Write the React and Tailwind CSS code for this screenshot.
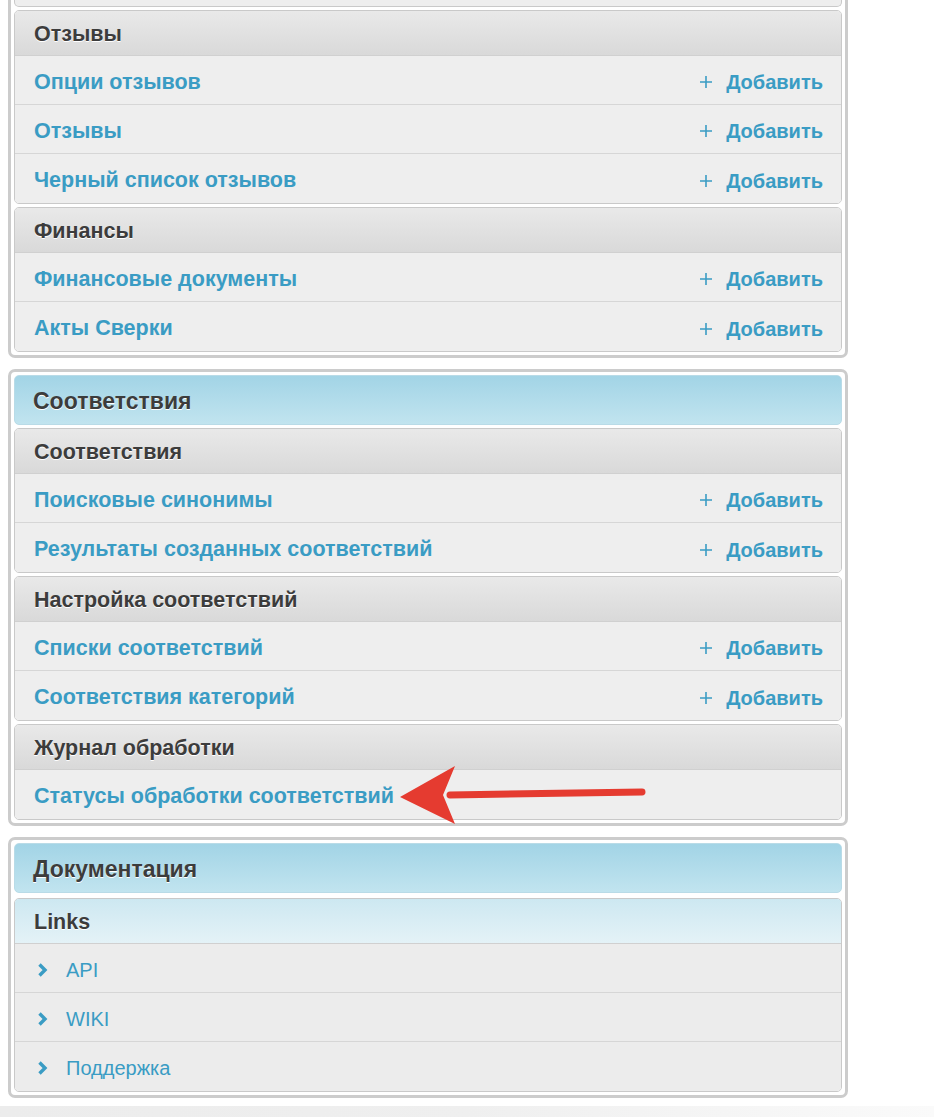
import React from 'react';

const font = { fontFamily: '"Liberation Sans", Arial, sans-serif' };

function Plus() {
  return (
    <svg width="14" height="14" viewBox="0 0 14 14" className="shrink-0">
      <path d="M7 1v12M1 7h12" stroke="#3a9cc4" strokeWidth="1.6" />
    </svg>
  );
}

function Chevron() {
  return (
    <svg width="11" height="16" viewBox="0 0 11 16" className="shrink-0">
      <path d="M2.5 2.5l5.5 5.5-5.5 5.5" fill="none" stroke="#3a9cc4" strokeWidth="3.4" />
    </svg>
  );
}

function Row({ label, add = true, last }) {
  return (
    <div className={`flex h-[49px] items-center justify-between bg-[#eeeeee] pl-[19px] pr-[18px] pt-[4px] ${last ? '' : 'border-b border-[#d6d6d6]'}`}>
      <a className="text-[21.5px] font-bold text-[#3a9cc4]">{label}</a>
      {add && (
        <span className="flex items-center gap-[13px] text-[20px] font-bold text-[#3a9cc4]">
          <Plus />
          Добавить
        </span>
      )}
    </div>
  );
}

function Group({ title, rows }) {
  return (
    <div className="overflow-hidden rounded-[5px] border border-[#c9c9c9]">
      <div className="flex h-[45px] items-center border-b border-[#d0d0d0] bg-gradient-to-b from-[#e9e9e9] to-[#d9d9d9] pl-[19px] pt-[3px] text-[21.5px] font-bold text-[#3c3c3c] [text-shadow:0_1px_0_#fff]">
        {title}
      </div>
      {rows.map((r, i) => (
        <Row key={r.label} label={r.label} add={r.add !== false} last={i === rows.length - 1} />
      ))}
    </div>
  );
}

function ModuleHead({ title }) {
  return (
    <div className="flex h-[50px] items-center rounded-[5px] border border-[#b9dbe7] bg-gradient-to-b from-[#a2d4e6] to-[#c1e4ef] pl-[18px] pt-[2px] text-[23px] font-bold text-[#3c3c3c] [text-shadow:0_1px_0_#fff]">
      {title}
    </div>
  );
}

function Module({ children, cut }) {
  return (
    <div
      className={`flex flex-col gap-[3px] border-[3px] border-[#cccccc] bg-white px-[3px] pb-[3px] ${
        cut ? 'rounded-b-[7px] border-t-0' : 'rounded-[7px] pt-[3px]'
      }`}
    >
      {children}
    </div>
  );
}

export default function App() {
  return (
    <div className="relative min-h-screen bg-white" style={font}>
      <div className="ml-2 flex w-[840px] flex-col gap-[11px]">
        <Module cut>
          <div className="h-[7px] rounded-b-[5px] border-x border-b border-[#c9c9c9] bg-[#eeeeee]" />
          <Group
            title="Отзывы"
            rows={[{ label: 'Опции отзывов' }, { label: 'Отзывы' }, { label: 'Черный список отзывов' }]}
          />
          <Group title="Финансы" rows={[{ label: 'Финансовые документы' }, { label: 'Акты Сверки' }]} />
        </Module>

        <Module>
          <ModuleHead title="Соответствия" />
          <Group
            title="Соответствия"
            rows={[{ label: 'Поисковые синонимы' }, { label: 'Результаты созданных соответствий' }]}
          />
          <Group
            title="Настройка соответствий"
            rows={[{ label: 'Списки соответствий' }, { label: 'Соответствия категорий' }]}
          />
          <Group title="Журнал обработки" rows={[{ label: 'Статусы обработки соответствий', add: false }]} />
        </Module>

        <Module>
          <ModuleHead title="Документация" />
          <div className="mt-[2px] overflow-hidden rounded-[5px] border border-[#c9c9c9]">
            <div className="flex h-[45px] items-center border-b border-[#d0d0d0] bg-gradient-to-b from-[#cde8f1] to-[#e4f2f7] pl-[19px] pt-[3px] text-[21.5px] font-bold text-[#3c3c3c] [text-shadow:0_1px_0_#fff]">
              Links
            </div>
            {['API', 'WIKI', 'Поддержка'].map((l, i) => (
              <div
                key={l}
                className={`flex h-[49px] items-center gap-[18px] bg-[#ececec] pl-[22px] pt-[3px] ${i < 2 ? 'border-b border-[#d6d6d6]' : ''}`}
              >
                <Chevron />
                <a className="text-[20px] text-[#3a9cc4]">{l}</a>
              </div>
            ))}
          </div>
        </Module>
      </div>

      <div className="mt-2 h-[24px] bg-gradient-to-r from-[#ececec] via-[#efefef] to-[#fafafa]" />

      <svg className="pointer-events-none absolute left-[395px] top-[762px]" width="260" height="66" viewBox="0 0 260 66">
        <path d="M247 30 L55 33" stroke="#e53b30" strokeWidth="7" strokeLinecap="round" />
        <path d="M5 35 L60 4 L48 33 L60 62 Z" fill="#e53b30" />
      </svg>
    </div>
  );
}
